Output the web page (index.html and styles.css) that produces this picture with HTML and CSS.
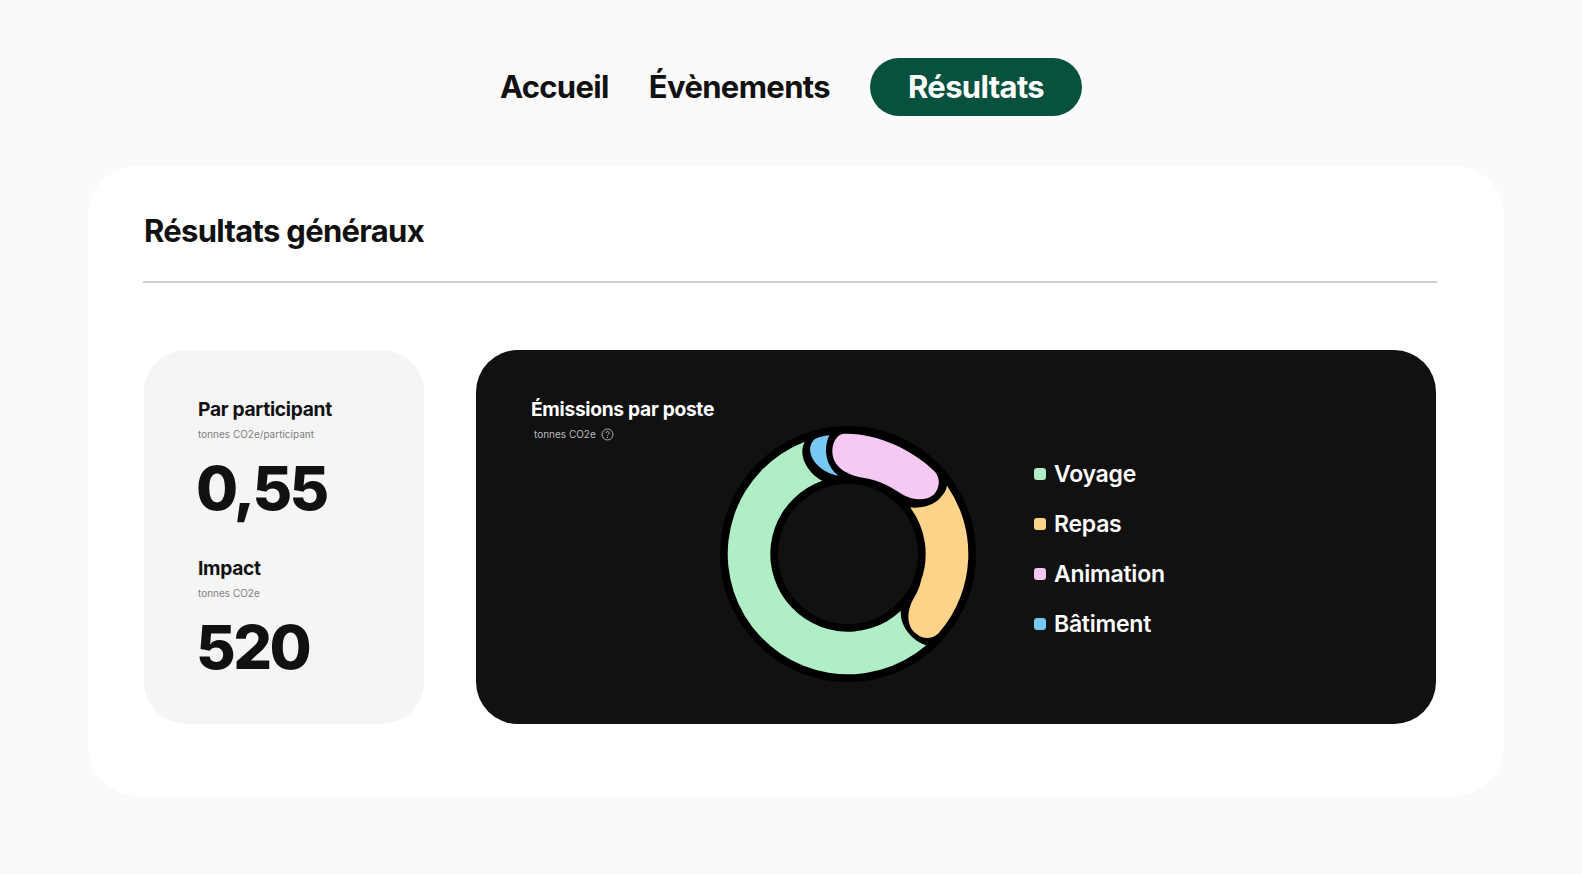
FILE: index.html
```html
<!DOCTYPE html>
<html lang="fr">
<head>
<meta charset="utf-8">
<title>Résultats</title>
<link rel="stylesheet" href="styles.css">
</head>
<body>
<nav class="nav">
  <a class="nav-link">Accueil</a>
  <a class="nav-link">Évènements</a>
  <a class="nav-link nav-active">Résultats</a>
</nav>
<main class="panel">
  <h1 class="panel-title">Résultats généraux</h1>
  <hr class="rule">
  <div class="cards">
    <section class="stats">
      <div class="stat">
        <h2 class="card-title">Par participant</h2>
        <p class="unit">tonnes CO2e/participant</p>
        <p class="value">0,55</p>
      </div>
      <div class="stat">
        <h2 class="card-title">Impact</h2>
        <p class="unit">tonnes CO2e</p>
        <p class="value">520</p>
      </div>
    </section>
    <section class="chart-card">
      <div class="chart-head">
        <h2 class="card-title light">Émissions par poste</h2>
        <p class="unit light-unit">tonnes CO2e
          <svg class="help" viewBox="0 0 14 14" width="13" height="13"><circle cx="7" cy="7" r="5.9" fill="none" stroke="#bdbdbd" stroke-width="1"/><path d="M5.3 5.6a1.75 1.75 0 1 1 2.6 1.5c-.6.35-.9.6-.9 1.2" fill="none" stroke="#bdbdbd" stroke-width="1"/><circle cx="7" cy="10.1" r=".6" fill="#bdbdbd"/></svg>
        </p>
      </div>
      <svg class="donut" viewBox="0 0 900 870" width="300" height="290">
        <circle cx="444" cy="432" r="297" fill="none" stroke="#000" stroke-width="174"/>
        <path fill="#b0eec5" d="M314.3 95.1A361 361 0 1 0 679 706.1C640 695 598 650 602.7 602.6A233 233 0 1 1 366.8 212.2C330 195 290 140 314.3 95.1Z"/>
        <path fill="#75c9f3" d="M388 76C370 78 355 82 345 87C335 95 328 110 331 125C335 160 375 190 415 197C385 175 365 125 388 76Z"/>
        <path fill="#f5c9f3" d="M432 71C530 68 640 120 705 185C722 205 720 235 700 255C680 272 640 272 610 255C580 235 540 210 490 203C440 195 398 170 397 125C397 95 412 72 432 71Z"/>
        <path fill="#fed48a" d="M740.6 226.2A361 361 0 0 1 719.8 664.8C705 687 670 690 650 672C625 655 620 620 630 590C640 560 655 550 663.4 510.5A233 233 0 0 0 630.9 292.8C670 295 705 285 722 262C732 250 740 240 740.6 226.2Z"/>
      </svg>
      <ul class="legend">
        <li class="legend-item"><span class="swatch swatch-green"></span>Voyage</li>
        <li class="legend-item"><span class="swatch swatch-orange"></span>Repas</li>
        <li class="legend-item"><span class="swatch swatch-pink"></span>Animation</li>
        <li class="legend-item"><span class="swatch swatch-blue"></span>Bâtiment</li>
      </ul>
    </section>
  </div>
</main>
</body>
</html>
```
FILE: styles.css
```css
* { box-sizing: border-box; }
html, body { margin: 0; height: 100%; }
body {
  background: #fafafa;
  font-family: Inter, "Liberation Sans", sans-serif;
  color: #111;
  overflow: hidden;
}
.nav {
  display: flex;
  justify-content: center;
  align-items: center;
  gap: 40px;
  padding-top: 58px;
}
.nav-link {
  font-size: 31px;
  font-weight: 700;
  letter-spacing: -0.65px;
  line-height: 58px;
}
.nav-active {
  background: #07513e;
  color: #fff;
  border-radius: 29px;
  padding: 0 38px;
}
.panel {
  width: 1416px;
  height: 630px;
  margin: 50px 0 0 88px;
  background: #fff;
  border-radius: 50px;
  padding: 46px 67px 0 56px;
}
.panel-title {
  margin: 0;
  font-size: 31px;
  line-height: 38px;
  font-weight: 700;
  letter-spacing: -0.7px;
}
.rule {
  margin: 31px 0 0 -1px;
  border: 0;
  height: 2px;
  background: #d0d0d0;
}
.cards {
  display: flex;
  gap: 52px;
  margin-top: 67px;
  height: 374px;
}
.stats {
  width: 280px;
  background: #f5f5f5;
  border-radius: 42px;
  padding: 46px 0 0 54px;
  display: flex;
  flex-direction: column;
  gap: 29px;
}
.card-title {
  margin: 0;
  font-size: 19.2px;
  line-height: 26px;
  font-weight: 700;
  letter-spacing: -0.3px;
}
.unit {
  margin: 5px 0 0;
  font-size: 10px;
  line-height: 14px;
  color: #808080;
}
.value {
  margin: 9px 0 0 -2px;
  font-size: 61px;
  line-height: 76px;
  font-weight: 800;
  letter-spacing: -2.6px;
}
.chart-card {
  width: 960px;
  background: #111;
  border-radius: 42px;
  display: flex;
  align-items: flex-start;
  padding: 46px 0 0 55px;
}
.chart-head {
  width: 169px;
  white-space: nowrap;
}
.light { color: #fff; }
.light-unit {
  color: #bdbdbd;
  padding-left: 3px;
  display: flex;
  align-items: center;
  gap: 5px;
}
.donut {
  flex: none;
  margin-top: 14px;
}
.legend {
  list-style: none;
  margin: 63px 0 0 34px;
  padding: 0;
  display: flex;
  flex-direction: column;
  gap: 20px;
}
.legend-item {
  display: flex;
  align-items: center;
  gap: 8px;
  color: #fff;
  font-size: 23px;
  line-height: 30px;
  font-weight: 600;
  letter-spacing: -0.25px;
}
.swatch {
  width: 12px;
  height: 12px;
  border-radius: 3px;
}
.swatch-green { background: #b0eec5; }
.swatch-orange { background: #fed48a; }
.swatch-pink { background: #f5c9f3; }
.swatch-blue { background: #75c9f3; }
```
